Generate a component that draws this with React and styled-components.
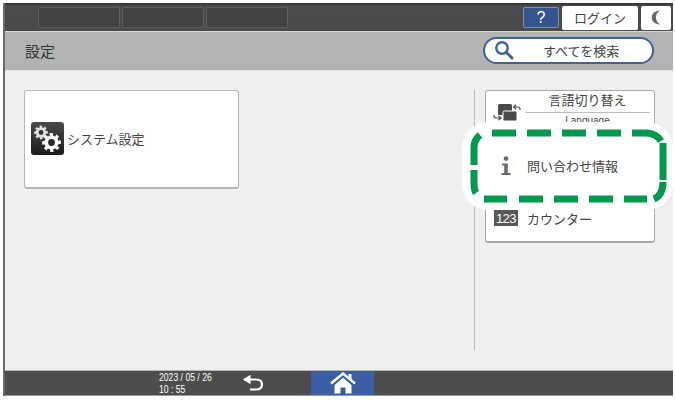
import React from 'react';
import styled, { createGlobalStyle } from 'styled-components';

const Global = createGlobalStyle`
  html, body {
    margin: 0;
    background: #ffffff;
    font-family: "Liberation Sans", "Noto Sans CJK JP", sans-serif;
  }
`;

const Page = styled.div`
  position: relative;
  width: 675px;
  height: 400px;
  overflow: hidden;
  background: #ffffff;
  padding: 3px 2px 4px 3px;
  box-sizing: border-box;
`;

const Screen = styled.div`
  width: 100%;
  height: 393px;
  display: flex;
  flex-direction: column;
  border-left: 2px solid #6a6a6a;
  box-sizing: border-box;
`;

const TopBar = styled.div`
  height: 29px;
  flex: none;
  display: flex;
  align-items: center;
  box-sizing: border-box;
  padding: 1px 2px 0 33px;
  background: linear-gradient(#2e2e2e 0, #4c4c4c 3px, #4a4a4a 100%);
  border-bottom: 1px solid #d8d8d8;
`;

const Slot = styled.div`
  width: 82px;
  height: 21px;
  margin-right: 2px;
  box-sizing: border-box;
  background: #424242;
  border: 1px solid #5e5e5e;
  border-radius: 2px;
`;

const TopRight = styled.div`
  margin-left: auto;
  display: flex;
  align-items: center;
  gap: 3px;
`;

const HelpButton = styled.div`
  width: 36px;
  height: 21px;
  display: flex;
  align-items: center;
  justify-content: center;
  box-sizing: border-box;
  background: #34558f;
  border: 1px solid #7d8ea9;
  border-radius: 2px;
  color: #ffffff;
  font-size: 16px;
`;

const LightButton = styled.div`
  width: ${(p) => p.$w}px;
  height: 24px;
  display: flex;
  align-items: center;
  justify-content: center;
  background: #ffffff;
  border-radius: 2px;
  color: #444444;
  font-size: 13px;
`;

const TitleBar = styled.div`
  height: 39px;
  flex: none;
  display: flex;
  align-items: center;
  justify-content: space-between;
  box-sizing: border-box;
  padding: 0 19px 2px 20px;
  background: #b3b3b3;
  border-bottom: 1px solid #e4e4e4;
`;

const Title = styled.div`
  font-size: 15px;
  color: #333333;
`;

const SearchBox = styled.div`
  width: 171px;
  height: 27px;
  display: flex;
  align-items: center;
  box-sizing: border-box;
  padding-left: 9px;
  background: #ffffff;
  border: 2px solid #3e619f;
  border-radius: 14px;
  font-size: 13px;
  color: #444444;
`;

const SearchLabel = styled.span`
  margin-left: 29px;
`;

const SearchIcon = styled.svg`
  flex: none;
`;

const Content = styled.div`
  flex: 1;
  display: flex;
  background: #efefed;
  padding: 19px 18px 20px 19px;
  box-sizing: border-box;
  min-height: 0;
`;

const MainCard = styled.div`
  width: 215px;
  height: 99px;
  display: flex;
  align-items: center;
  gap: 3px;
  box-sizing: border-box;
  padding: 0 0 2px 6px;
  background: #ffffff;
  border: 1px solid #b5b5b5;
  border-bottom-width: 2px;
  border-radius: 3px;
  font-size: 13px;
  color: #444444;
`;

const Side = styled.div`
  margin-left: auto;
  width: 181px;
  display: flex;
  flex-direction: column;
  box-sizing: border-box;
  padding-left: 10px;
  border-left: 1px solid #b8b8b8;
`;

const SideCard = styled.div`
  height: 153px;
  background: #ffffff;
  border: 1px solid #a8a8a8;
  border-bottom-width: 2px;
  border-radius: 3px;
  box-sizing: border-box;
  display: flex;
  flex-direction: column;
`;

const LangRow = styled.div`
  height: 50px;
  flex: none;
  display: flex;
  align-items: flex-start;
  box-sizing: border-box;
  padding-left: 7px;
  font-size: 13px;
  color: #444444;
`;

const LangIcon = styled.svg`
  flex: none;
  margin-top: 12px;
`;

const LangText = styled.div`
  width: 125px;
  margin-left: 3px;
  text-align: center;
`;

const LangTitle = styled.div`
  height: 21px;
  line-height: 19px;
  border-bottom: 1px solid #bdbdbd;
`;

const LangSub = styled.div`
  font-size: 10px;
  line-height: 16px;
`;

const InfoSpacer = styled.div`
  height: 56px;
  flex: none;
`;

const CounterRow = styled.div`
  height: 44px;
  flex: none;
  display: flex;
  align-items: center;
  gap: 9px;
  box-sizing: border-box;
  padding: 0 0 2px 8px;
  font-size: 13px;
  color: #444444;
`;

const CounterBadge = styled.div`
  width: 24px;
  height: 16px;
  display: flex;
  align-items: center;
  justify-content: center;
  background: #585858;
  color: #ffffff;
  font-size: 13px;
  letter-spacing: -0.5px;
`;

const Footer = styled.div`
  height: 26px;
  flex: none;
  display: flex;
  align-items: center;
  box-sizing: border-box;
  background: #4d4d4d;
  border-top: 1px solid #b5b5b5;
  border-bottom: 1px solid #9a9a9a;
  color: #ffffff;
`;

const DateTime = styled.div`
  margin-left: 154px;
  width: 82px;
  flex: none;
  font-size: 11.5px;
  line-height: 12px;
  white-space: nowrap;
  transform: scaleX(0.75);
  transform-origin: left center;
`;

const BackIcon = styled.svg`
  flex: none;
`;

const HomeButton = styled.div`
  width: 63px;
  height: 100%;
  margin-left: 46px;
  display: flex;
  align-items: center;
  justify-content: center;
  background: #3a5fa4;
`;

const Highlight = styled.div`
  position: absolute;
  left: 462px;
  top: 122px;
  width: 211px;
  height: 88px;
  display: flex;
  align-items: center;
  gap: 16px;
  box-sizing: border-box;
  padding: 0 0 1px 39px;
  background: #ffffff;
  border-radius: 26px;
  font-size: 13px;
  color: #444444;
`;

const DashFrame = styled.svg`
  position: absolute;
  left: 0;
  top: 0;
`;

const gearPoints = (cx, cy, outer, inner, teeth) => {
  const pts = [];
  const step = (Math.PI * 2) / teeth;
  for (let i = 0; i < teeth; i++) {
    const a = i * step;
    [[-0.3, outer], [0.17, outer], [0.3, inner], [0.7, inner]].forEach(([d, r]) => {
      const t = a + d * step;
      pts.push(`${(cx + r * Math.cos(t)).toFixed(2)},${(cy + r * Math.sin(t)).toFixed(2)}`);
    });
  }
  return pts.join(' ');
};

const GearsIcon = () => (
  <svg width="33" height="33" viewBox="0 0 33 33">
    <defs>
      <linearGradient id="gearBg" x1="0" y1="0" x2="0" y2="1">
        <stop offset="0" stopColor="#4a4a4a" />
        <stop offset="1" stopColor="#1c1c1c" />
      </linearGradient>
    </defs>
    <rect width="33" height="33" rx="3" fill="url(#gearBg)" />
    <polygon points={gearPoints(10, 10.5, 7, 5.2, 8)} fill="#e0e0e0" />
    <circle cx="10" cy="10.5" r="2.4" fill="#333" />
    <polygon points={gearPoints(20.5, 20.5, 9.5, 7, 8)} fill="#ffffff" />
    <circle cx="20.5" cy="20.5" r="3.4" fill="#2a2a2a" />
  </svg>
);

const InfoIcon = () => (
  <svg width="10" height="19" viewBox="0 0 10 19">
    <circle cx="5" cy="2.6" r="2.4" fill="#6b6b6b" />
    <path d="M1 7.5h5.800v9.500H9.500v2H.5v-2h2.700V9.500H1z" fill="#6b6b6b" />
  </svg>
);

const MoonIcon = () => (
  <svg width="10" height="15" viewBox="0 0 10 15">
    <path d="M9 .5C3.500 1 .8 3.800.8 7.500S3.500 14 9 14.500C6.300 12.800 5 10.500 5 7.500S6.300 2.200 9 .5z" fill="#666" />
  </svg>
);

const HomeIcon = () => (
  <svg width="26" height="22" viewBox="0 0 26 22">
    <path d="M1 11.500 13 1.500l12 10" fill="none" stroke="#fff" strokeWidth="2.400" />
    <path d="M18.500 2h3v6l-3-2.500z" fill="#fff" />
    <path d="M4.500 13 13 5.800 21.500 13v8.500h-6v-6h-5v6h-6z" fill="#fff" />
  </svg>
);

// dashes are not even round the corners, so each is listed (coords are page minus overlay origin)
const dashes = [
  'M30 11h24', 'M65 11h24', 'M100 11h24', 'M135 11h24',
  'M170 11h15q10 1 14 8',
  'M201 21v37',
  'M201 60q0 13-9 17',
  'M185 77h-23', 'M151 77h-24', 'M116 77h-24', 'M81 77h-24', 'M45 77h-23',
  'M14 71q-2-3-2-10V48',
  'M12 43V25q0-7 6-12',
];

export default function App() {
  return (
    <Page>
      <Global />
      <Screen>
        <TopBar>
          <Slot />
          <Slot />
          <Slot />
          <TopRight>
            <HelpButton>?</HelpButton>
            <LightButton $w={76}>ログイン</LightButton>
            <LightButton $w={30}><MoonIcon /></LightButton>
          </TopRight>
        </TopBar>
        <TitleBar>
          <Title>設定</Title>
          <SearchBox>
            <SearchIcon width="20" height="20" viewBox="0 0 20 20">
              <circle cx="8" cy="8" r="5.7" fill="none" stroke="#3e619f" strokeWidth="2.4" />
              <path d="M12.300 12.300 18 18" stroke="#3e619f" strokeWidth="3" strokeLinecap="round" />
            </SearchIcon>
            <SearchLabel>すべてを検索</SearchLabel>
          </SearchBox>
        </TitleBar>
        <Content>
          <MainCard>
            <GearsIcon />
            システム設定
          </MainCard>
          <Side>
            <SideCard>
              <LangRow>
                <LangIcon width="29" height="19" viewBox="0 0 29 19">
                  <rect x="5" y="1" width="14" height="11" rx="1.5" fill="#4a4a4a" />
                  <rect x="10" y="8" width="14" height="10" rx="1.5" fill="#4a4a4a" stroke="#fff" />
                  <path d="M21 4h4q2 0 2 2v1M23 1.800 20.500 4 23 6.200" fill="none" stroke="#4a4a4a" strokeWidth="1.2" />
                  <path d="M8 15H3q-2 0-2-2v-1M5.500 17.200 8 15l-2.500-2.200" fill="none" stroke="#4a4a4a" strokeWidth="1.2" />
                </LangIcon>
                <LangText>
                  <LangTitle>言語切り替え</LangTitle>
                  <LangSub>Language</LangSub>
                </LangText>
              </LangRow>
              <InfoSpacer />
              <CounterRow>
                <CounterBadge>123</CounterBadge>
                カウンター
              </CounterRow>
            </SideCard>
          </Side>
        </Content>
        <Footer>
          <DateTime>
            2023 / 05 / 26
            <br />
            10 : 55
          </DateTime>
          <BackIcon width="24" height="18" viewBox="0 0 24 18">
            <path d="M3 5.500h12q6 0 6 5t-6 5H9" fill="none" stroke="#fff" strokeWidth="2.2" />
            <path d="M9.500.8 2 5.500l7.500 4.700z" fill="#fff" />
          </BackIcon>
          <HomeButton><HomeIcon /></HomeButton>
        </Footer>
      </Screen>
      <Highlight>
        <DashFrame width="211" height="88" viewBox="0 0 211 88">
          {dashes.map((d) => (
            <path key={d} d={d} fill="none" stroke="#00994d" strokeWidth="7" />
          ))}
        </DashFrame>
        <InfoIcon />
        問い合わせ情報
      </Highlight>
    </Page>
  );
}
